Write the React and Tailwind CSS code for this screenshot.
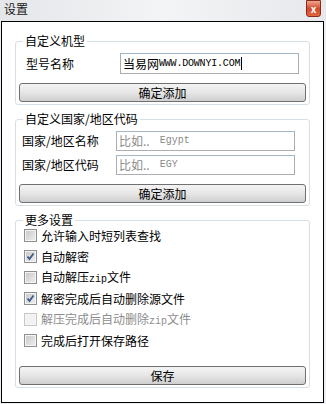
import React from "react";

const CJK = "font-['Noto_Sans_CJK_SC','Noto_Sans',sans-serif]";
const MONO = "font-['Liberation_Mono','DejaVu_Sans_Mono',monospace]";

function Group({ title, className = "", children }) {
  return (
    <fieldset
      className={`mx-[13px] rounded-[3px] border border-[#d5dfe5] px-[3px] pb-[2px] ${className}`}
    >
      <legend className="ml-[4px] px-[2px] text-[12px] leading-[16px] text-black">
        {title}
      </legend>
      {children}
    </fieldset>
  );
}

function Btn({ label, className = "" }) {
  return (
    <button
      className={`flex h-[19px] w-full items-center justify-center rounded-[3px] border border-[#707070] bg-gradient-to-b from-[#f4f4f4] via-[#e6e6e6] to-[#cfcfcf] text-[12px] leading-none text-black ${className}`}
    >
      {label}
    </button>
  );
}

function Field({ label, value, placeholder, h = "h-[20px]", labelClass = "" }) {
  return (
    <div className="flex items-center">
      <span className={`w-[94px] shrink-0 text-[12px] leading-none ${labelClass}`}>{label}</span>
      <div
        className={`flex ${h} w-[179px] items-center border border-[#abadb3] border-t-[#a3b6c8] bg-white pl-[2px]`}
      >
        {value ? (
          <span className="flex items-center text-[12px] leading-none text-black">
            当易网
            <span className={`${MONO} text-[10px] tracking-[-0.2px]`}>WWW.DOWNYI.COM</span>
            <span className="ml-[1px] h-[13px] w-[1px] bg-black" />
          </span>
        ) : (
          <span className="flex items-center text-[12px] leading-none text-[#8a8a8a]">
            比如..
            <span className={`${MONO} ml-[10px] text-[10px]`}>{placeholder}</span>
          </span>
        )}
      </div>
    </div>
  );
}

function Check({ label, checked, disabled }) {
  return (
    <div className="flex h-[21px] items-center pl-[5px]">
      <span
        className={`flex h-[13px] w-[13px] items-center justify-center border ${
          disabled ? "border-[#c8c8c8] bg-[#f6f6f6]" : "border-[#8f8f8f] bg-[#f4f4f4]"
        }`}
      >
        <span
          className={`flex h-[9px] w-[9px] items-center justify-center ${
            disabled ? "bg-[#f2f2f2]" : "bg-gradient-to-br from-[#cbcbcb] to-[#ececec]"
          }`}
        >
          {checked && (
            <svg width="9" height="9" viewBox="0 0 9 9">
              <path d="M1.5 4.5 L3.5 7 L7.5 1.5" fill="none" stroke="#3a5a8c" strokeWidth="1.8" />
            </svg>
          )}
        </span>
      </span>
      <span
        className={`ml-[4px] text-[12px] leading-none ${disabled ? "text-[#8d8d8d]" : "text-black"}`}
      >
        {label}
      </span>
    </div>
  );
}

function Zip({ pre, post }) {
  return (
    <>
      {pre}
      <span className={`${MONO} text-[10px]`}>zip</span>
      {post}
    </>
  );
}

export default function App() {
  return (
    <div className={`${CJK} h-[404px] w-[326px] overflow-hidden bg-[#eceef1] text-black`}>
      {/* title bar */}
      <div className="flex h-[21px] items-start bg-gradient-to-r from-[#e4e6e9] via-[#f3f4f6] to-[#e6e8eb]">
        <span className="ml-[4px] mt-[3px] text-[12px] leading-none text-[#1a1a1a]">设置</span>
        <div className="ml-auto mr-[5px] flex h-[17px] w-[15px] items-center justify-center rounded-b-[3px] border border-[#8a2a1a] bg-gradient-to-b from-[#eea58e] via-[#d2492c] to-[#e0683f] text-[10px] font-bold leading-none text-white">
          x
        </div>
      </div>

      {/* window body */}
      <div className="ml-[1px] h-[382px] w-[323px] border border-black bg-white pt-[11px]">
        <Group title="自定义机型">
          <div className="mt-[4px] pl-[7px]">
            <Field label="型号名称" value h="h-[21px]" labelClass="w-[87px]" />
          </div>
          <Btn label="确定添加" className="mt-[9px]" />
        </Group>

        <Group title="自定义国家/地区代码" className="mt-[6px]">
          <div className="mt-[4px] flex flex-col gap-[4px] pl-[3px]">
            <Field label="国家/地区名称" placeholder="Egypt" />
            <Field label="国家/地区代码" placeholder="EGY" />
          </div>
          <Btn label="确定添加" className="mt-[9px]" />
        </Group>

        <Group title="更多设置" className="mt-[6px]">
          <div className="-mt-[3px] flex flex-col">
            <Check label="允许输入时短列表查找" />
            <Check label="自动解密" checked />
            <Check label={<Zip pre="自动解压" post="文件" />} />
            <Check label="解密完成后自动删除源文件" checked />
            <Check label={<Zip pre="解压完成后自动删除" post="文件" />} disabled />
            <Check label="完成后打开保存路径" />
          </div>
          <Btn label="保存" className="mt-[15px]" />
        </Group>
      </div>
    </div>
  );
}
